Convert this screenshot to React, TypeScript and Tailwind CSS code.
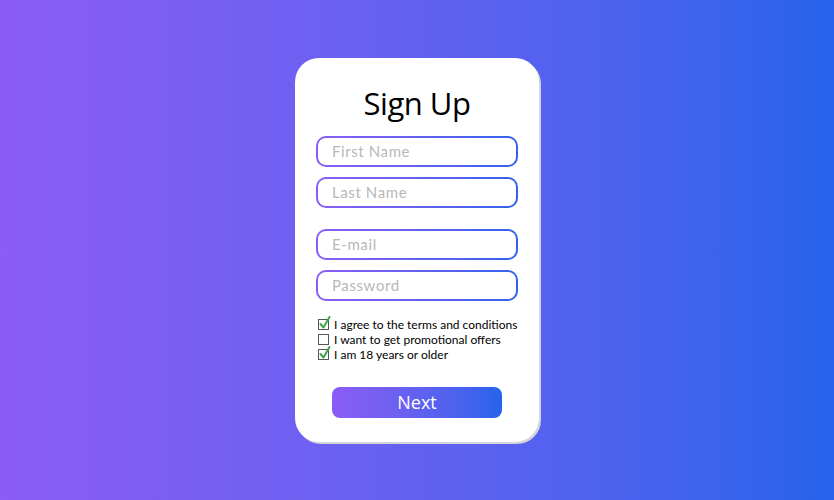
import React from "react";

function Field({ placeholder, className = "" }: { placeholder: string; className?: string }) {
  return (
    <div className={`rounded-[10px] bg-linear-to-r from-[#8b5cf6] to-[#2f63ea] p-[2px] ${className}`}>
      <div className="flex h-[27px] items-center rounded-[8px] bg-white pl-[14px]">
        <span className="text-[15px] tracking-[0.6px] text-[#b8b8b8]" style={{ fontFamily: "Lato, 'Noto Sans', sans-serif" }}>
          {placeholder}
        </span>
      </div>
    </div>
  );
}

function Check({ checked, label }: { checked: boolean; label: string }) {
  return (
    <div className="flex h-[15px] items-center gap-[5px]">
      <div className="relative h-[11px] w-[11px] shrink-0 border border-[#555] bg-white">
        {checked && (
          <svg className="absolute -top-[4px] left-[0px]" width="12" height="14" viewBox="0 0 12 14">
            <path d="M1.5 8 L4.5 11.5 L10.5 1" fill="none" stroke="#3aa845" strokeWidth="2" strokeLinecap="round" strokeLinejoin="round" />
          </svg>
        )}
      </div>
      <span
        className="whitespace-nowrap text-[12px] leading-none text-black"
        style={{ fontFamily: "Lato, 'Noto Sans', sans-serif" }}
      >
        {label}
      </span>
    </div>
  );
}

export default function App() {
  return (
    <div className="flex h-[500px] w-[834px] items-start justify-center bg-linear-to-r from-[#8b5cf6] to-[#2563eb]">
      <div className="mt-[58px] flex h-[384px] w-[244px] flex-col items-center rounded-[24px] bg-white shadow-[2px_2px_0_0_#d4d4dc]">
        <h1
          className="mt-[25px] text-[31px] leading-[40px] text-black"
          style={{ fontFamily: "'Open Sans', 'Noto Sans', sans-serif", letterSpacing: "-0.5px" }}
        >
          Sign Up
        </h1>
        <div className="mt-[13px] flex w-[202px] flex-col">
          <Field placeholder="First Name" />
          <Field placeholder="Last Name" className="mt-[10px]" />
          <Field placeholder="E-mail" className="mt-[21px]" />
          <Field placeholder="Password" className="mt-[10px]" />
        </div>
        <div className="mt-[16px] flex w-[202px] flex-col pl-[2px]">
          <Check checked label="I agree to the terms and conditions" />
          <Check checked={false} label="I want to get promotional offers" />
          <Check checked label="I am 18 years or older" />
        </div>
        <button
          className="mt-[25px] flex h-[31px] w-[170px] items-center justify-center rounded-[8px] bg-linear-to-r from-[#8b5cf6] to-[#2563eb] text-[18px] text-white"
          style={{ fontFamily: "'Open Sans', 'Noto Sans', sans-serif" }}
        >
          Next
        </button>
      </div>
    </div>
  );
}
